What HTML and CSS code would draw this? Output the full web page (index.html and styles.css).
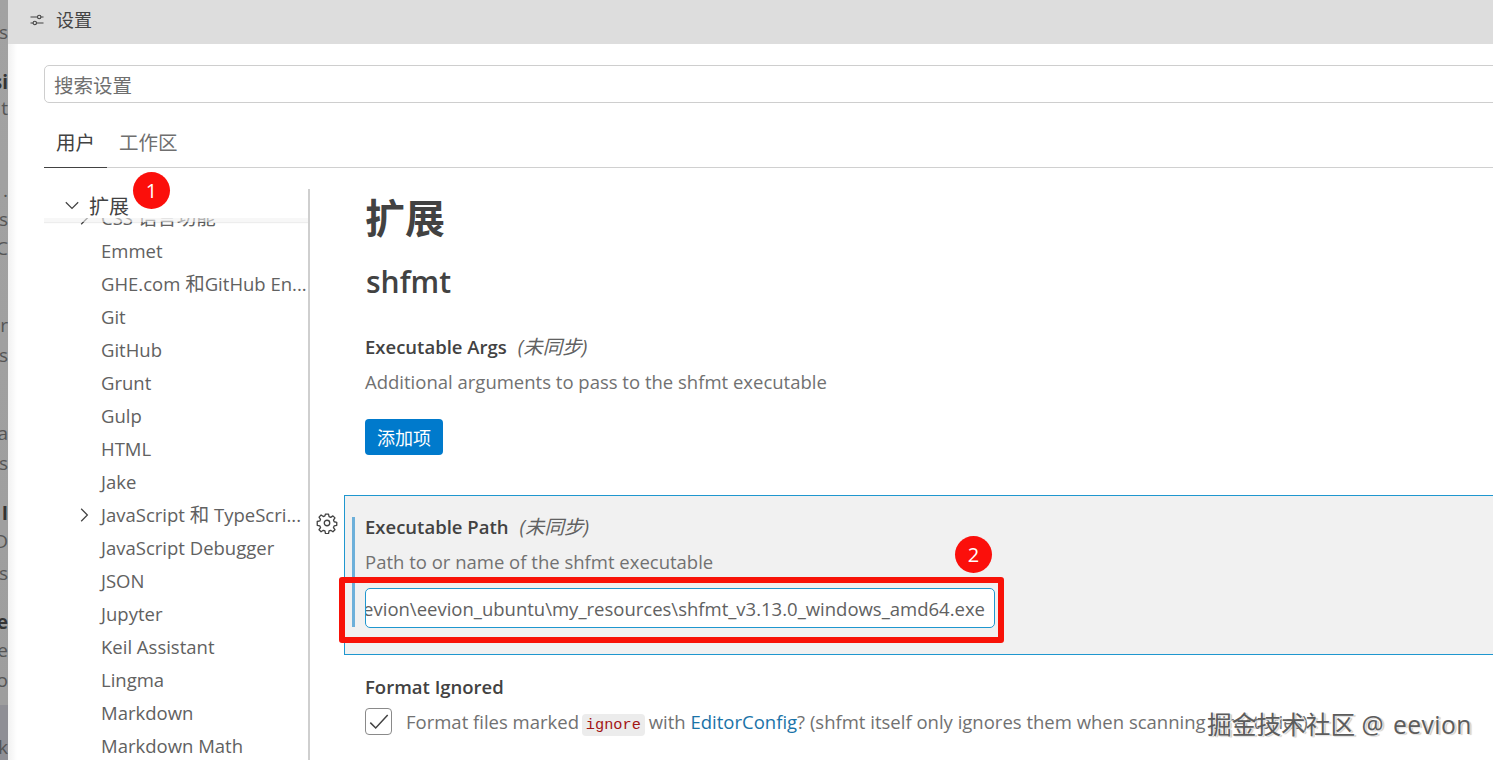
FILE: index.html
```html
<!DOCTYPE html>
<html lang="zh">
<head>
<meta charset="utf-8">
<title>设置</title>
<link rel="stylesheet" href="styles.css">
</head>
<body>
<div class="desktop">
  <aside class="behind">
    <span class="frag f1">os</span><span class="frag f2 strong">si</span><span class="frag f3">t</span><span class="frag f4">.</span><span class="frag f5">ss</span><span class="frag f6">C</span><span class="frag f7">r</span><span class="frag f8">os</span><span class="frag f9">a</span><span class="frag f10">os</span><span class="frag f11 strong">I</span><span class="frag f12">D</span><span class="frag f13">os</span><span class="frag f14 strong">e</span><span class="frag f15">e</span><span class="frag f16">Vo</span><span class="frag f17">k</span>
  </aside>
  <main class="window">
    <header class="titlebar">
      <svg class="title-icon" viewBox="0 0 16 16" width="16" height="16" fill="none" stroke="#424242" stroke-width="1.1"><path d="M1.5 5h7M12 5h2.5M1.5 11H4M7.5 11h7"/><circle cx="10.2" cy="5" r="1.7"/><circle cx="5.8" cy="11" r="1.7"/></svg>
      <span class="title-text">设置</span>
    </header>
    <div class="searchbox"><span>搜索设置</span></div>
    <nav class="tabs">
      <span class="tab active">用户</span>
      <span class="tab">工作区</span>
    </nav>
    <div class="body">
      <div class="sidebar">
        <div class="side-head">
          <svg class="chev" viewBox="0 0 16 16" width="18" height="18" fill="none" stroke="#424242" stroke-width="1.1"><path d="M2.5 5.5 8 11l5.5-5.5"/></svg>
          <span>扩展</span>
        </div>
        <ul class="side-list">
          <li class="has-chev"><svg class="chev" viewBox="0 0 16 16" width="18" height="18" fill="none" stroke="#424242" stroke-width="1.1"><path d="M5.5 2.5 11 8l-5.5 5.5"/></svg>CSS <span class="cjk">语言功能</span></li>
          <li>Emmet</li>
          <li>GHE.com <span class="cjk">和</span>GitHub En...</li>
          <li>Git</li>
          <li>GitHub</li>
          <li>Grunt</li>
          <li>Gulp</li>
          <li>HTML</li>
          <li>Jake</li>
          <li class="has-chev"><svg class="chev" viewBox="0 0 16 16" width="18" height="18" fill="none" stroke="#424242" stroke-width="1.1"><path d="M5.5 2.5 11 8l-5.5 5.5"/></svg>JavaScript <span class="cjk">和</span> TypeScri...</li>
          <li>JavaScript Debugger</li>
          <li>JSON</li>
          <li>Jupyter</li>
          <li>Keil Assistant</li>
          <li>Lingma</li>
          <li>Markdown</li>
          <li>Markdown Math</li>
        </ul>
      </div>
      <div class="content">
        <h1 class="h-ext">扩展</h1>
        <h2 class="h-sec">shfmt</h2>
        <section class="setting s-args">
          <div class="s-title"><b>Executable Args</b><i>(未同步)</i></div>
          <p class="s-desc">Additional arguments to pass to the shfmt executable</p>
          <button class="btn">添加项</button>
        </section>
        <div class="focus-wrap">
          <svg class="gear" viewBox="0 0 16 16" width="22" height="22" fill="none" stroke="#424242" stroke-width="0.95" stroke-linejoin="round"><path d="M6.9 1.5h2.2l.4 1.9 1.2.5 1.6-1.1 1.5 1.5-1.1 1.6.5 1.2 1.9.4v2.2l-1.9.4-.5 1.2 1.1 1.6-1.5 1.5-1.6-1.1-1.2.5-.4 1.9H6.9l-.4-1.9-1.2-.5-1.6 1.1-1.5-1.5 1.1-1.6-.5-1.2-1.9-.4V6.9l1.9-.4.5-1.2-1.1-1.6 1.5-1.5 1.6 1.1 1.2-.5z"/><circle cx="8" cy="8" r="2"/></svg>
          <section class="focused">
            <div class="s-title"><b>Executable Path</b><i>(未同步)</i></div>
            <p class="s-desc">Path to or name of the shfmt executable</p>
            <div class="path-input"><span>evion\eevion_ubuntu\my_resources\shfmt_v3.13.0_windows_amd64.exe</span></div>
          </section>
        </div>
        <section class="setting s-format">
          <div class="s-title"><b>Format Ignored</b></div>
          <div class="check-row">
            <span class="checkbox"><svg viewBox="0 0 16 16" width="24" height="24" fill="none" stroke="#424242" stroke-width="1"><path d="M2.2 8.4 5.8 12 13.8 3.4"/></svg></span>
            <span class="check-text">Format files marked <code>ignore</code> with <a>EditorConfig</a>? (shfmt itself only ignores them when scanning directories)</span>
          </div>
        </section>
      </div>
    </div>
  </main>
  <span class="badge b1">1</span>
  <span class="badge b2">2</span>
  <div class="redbox"></div>
  <div class="watermark">掘金技术社区 @ <span class="wm-name">eevion</span></div>
</div>
</body>
</html>
```
FILE: styles.css
```css
* { box-sizing: border-box; }
html, body { margin: 0; padding: 0; }
body {
  width: 1493px;
  height: 760px;
  overflow: hidden;
  font-family: "Open Sans", "Noto Sans CJK SC", sans-serif;
  color: #616161;
}
.desktop {
  position: relative;
  display: flex;
  width: 1493px;
  height: 760px;
  overflow: hidden;
  background: #fff;
}
.behind {
  position: relative;
  flex: 0 0 8px;
  background: linear-gradient(#a2a2a2 0, #9e9e9e 705px, #8f8f95 705px);
  overflow: hidden;
}
.frag {
  position: absolute;
  right: 0;
  font-size: 19px;
  line-height: 24px;
  color: #555;
}
.frag.strong { font-weight: 700; color: #333; }
.f1 { top: 20px; } .f2 { top: 70px; } .f3 { top: 96px; } .f4 { top: 178px; }
.f5 { top: 207px; } .f6 { top: 236px; } .f7 { top: 313px; } .f8 { top: 343px; }
.f9 { top: 421px; } .f10 { top: 451px; } .f11 { top: 501px; } .f12 { top: 529px; }
.f13 { top: 561px; } .f14 { top: 610px; } .f15 { top: 638px; } .f16 { top: 668px; }
.f17 { top: 735px; }
.window {
  flex: 1;
  min-width: 0;
  display: flex;
  flex-direction: column;
  background: linear-gradient(90deg, #f1f1f1 0, #fff 9px);
}
.titlebar {
  flex: 0 0 44px;
  display: flex;
  align-items: center;
  padding: 0 0 5px 21px;
  gap: 11px;
  background: #dddddd;
}
.title-icon { flex: none; }
.title-text { font-size: 18px; line-height: 24px; color: #444; }
.searchbox {
  margin: 21px -10px 0 36px;
  height: 38px;
  border: 1px solid #cecece;
  border-radius: 5px;
  background: #fff;
  display: flex;
  align-items: center;
  padding-left: 9px;
  font-size: 19.5px;
  color: #6f6f6f;
}
.tabs {
  margin: 27px 0 0 36px;
  height: 38px;
  display: flex;
  border-bottom: 1px solid #d0d0d0;
  font-size: 19.5px;
  color: #6f6f6f;
}
.tab { padding: 0 12px; line-height: 25px; height: 38px; }
.tab.active { color: #424242; border-bottom: 1px solid #424242; }
.body {
  flex: 1;
  min-height: 0;
  display: flex;
  margin-top: 21px;
}
.sidebar {
  position: relative;
  flex: 0 0 266px;
  margin-left: 36px;
  border-right: 2px solid #cfcfcf;
  overflow: hidden;
}
.side-head {
  position: absolute;
  z-index: 2;
  inset: 0 0 auto 0;
  height: 29px;
  background: #fff;
  display: flex;
  align-items: center;
  padding: 3px 0 0 19px;
  gap: 8px;
  font-size: 20px;
  color: #424242;
  box-shadow: 0 4px 0 rgba(255,255,255,.55), 0 5px 1px rgba(0,0,0,.07);
}
.side-head .chev { margin-top: -1px; }
.side-list {
  list-style: none;
  margin: 12px 0 0;
  padding: 0;
  font-size: 18.5px;
  color: #616161;
}
.side-list li {
  position: relative;
  height: 33px;
  line-height: 33px;
  padding-left: 57px;
  white-space: nowrap;
  overflow: hidden;
}
.cjk { font-size: 19.5px; }
.side-list .chev {
  position: absolute;
  left: 31px;
  top: 8px;
}
.content {
  flex: 1;
  min-width: 0;
  display: flex;
  flex-direction: column;
  overflow: hidden;
  padding-left: 34px;
}
.h-ext {
  margin: 5px 0 0 21px;
  font-size: 40px;
  line-height: 48px;
  font-weight: 700;
  color: #424242;
}
.h-sec {
  margin: 20px 0 0 22px;
  font-size: 30px;
  line-height: 40px;
  font-weight: 600;
  color: #424242;
}
.setting { margin-left: 21px; }
.s-args { margin-top: 32px; }
.s-title { font-size: 18.5px; line-height: 26px; color: #424242; display: flex; gap: 11px; }
.s-title b { font-weight: 600; }
.s-title i { font-style: italic; font-size: 19.5px; color: #616161; }
.s-desc { margin: 9px 0 0; font-size: 18.5px; line-height: 26px; color: #717171; }
.btn {
  display: block;
  margin-top: 24px;
  width: 78px;
  height: 36px;
  border: 0;
  border-radius: 4px;
  background: #007acc;
  color: #fff;
  font: 18px "Noto Sans CJK SC", sans-serif;
  padding: 0;
}
.focus-wrap { position: relative; margin-top: 40px; }
.gear { position: absolute; left: -28px; top: 17px; }
.focused {
  position: relative;
  margin-right: -10px;
  height: 160px;
  border: 1px solid #1f97cf;
  background: #f1f1f1;
  padding: 18px 0 0 20px;
}
.focused::before {
  content: "";
  position: absolute;
  left: 7px;
  top: 21px;
  bottom: 27px;
  width: 3px;
  background: #6db0da;
}
.path-input {
  margin-top: 13px;
  width: 630px;
  height: 40px;
  border: 1px solid #1f97cf;
  border-radius: 5px;
  background: #fff;
  padding: 0 9px 0 1px;
  display: flex;
  align-items: center;
  justify-content: flex-end;
  overflow: hidden;
  font-size: 18.5px;
  color: #616161;
  white-space: nowrap;
}
.s-format { margin-top: 19px; }
.check-row { display: flex; align-items: center; gap: 14px; margin-top: 8px; white-space: nowrap; }
.checkbox {
  flex: none;
  width: 27px;
  height: 27px;
  border: 1px solid #8a8a8a;
  border-radius: 4px;
  display: flex;
  align-items: center;
  justify-content: center;
}
.check-text { font-size: 18.5px; color: #717171; }
.check-text code {
  font-family: "Liberation Mono", monospace;
  font-size: 15.3px;
  color: #a31515;
  background: #ececec;
  border-radius: 4px;
  padding: 2px 4px;
  margin: 0 -1px 0 -2px;
}
.check-text a { color: #1a73a8; }
.badge {
  position: absolute;
  z-index: 5;
  width: 37px;
  height: 37px;
  border-radius: 50%;
  background: #fb0f0b;
  color: #fff;
  font-family: "Open Sans", sans-serif;
  font-size: 20px;
  line-height: 37px;
  text-align: center;
}
.b1 { left: 133px; top: 172px; }
.b2 { left: 955px; top: 536px; }
.redbox {
  position: absolute;
  left: 339px;
  top: 577px;
  width: 665px;
  height: 66px;
  border: 6px solid #f81208;
  border-radius: 3px;
}
.watermark {
  position: absolute;
  z-index: 5;
  left: 1207px;
  top: 708px;
  font-size: 24.7px;
  line-height: 34px;
  white-space: nowrap;
  color: #5c5c5c;
  text-shadow: 1px 1px 0 #e6e6e6, 2px 1px 1px #c4c4c4;
}
.wm-name { letter-spacing: .4px; margin-left: 3px; }
```
